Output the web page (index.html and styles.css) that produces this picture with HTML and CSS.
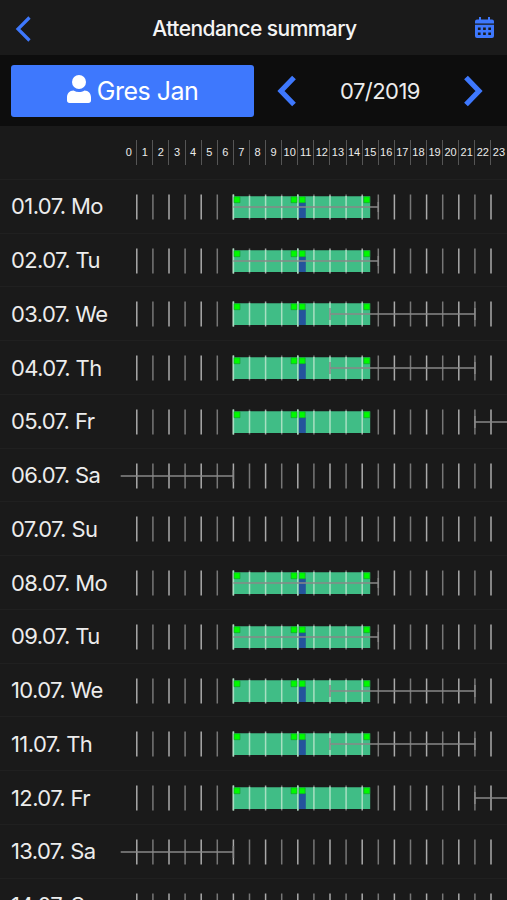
FILE: index.html
```
<!DOCTYPE html>
<html lang="en">
<head>
<meta charset="utf-8">
<title>Attendance summary</title>
<link rel="stylesheet" href="styles.css">
</head>
<body>
<header class="titlebar">
  <svg class="back" viewBox="0 0 16 26"><path d="M14.500 1.500 3 13l11.500 11.500"/></svg>
  <h1 class="title">Attendance summary</h1>
  <svg class="calendar" viewBox="0 0 19 21"><path fill-rule="evenodd" d="M4 0h2v2.500h7V0h2v2.500h2a2 2 0 0 1 2 2V6.500H0v-2a2 2 0 0 1 2-2h2zM0 7.700h19v11.300a2 2 0 0 1-2 2H2a2 2 0 0 1-2-2zM2.900 10.500v2.400h2.700v-2.400zm5.200 0v2.400h2.700v-2.400zm5.200 0v2.400h2.700v-2.400zM2.900 15.500v2.400h2.700v-2.400zm5.200 0v2.400h2.700v-2.400zm5.200 0v2.400h2.700v-2.400z"/></svg>
</header>
<section class="toolbar">
  <button class="person"><svg class="user" viewBox="0 0 24 28"><circle cx="12" cy="7" r="7"/><path d="M6.500 15.500c3.500 2 7.500 2 11 0 4 0 6.500 3 6.500 7v3c0 1.500-1 2.500-2.500 2.500h-19C1 28 0 27 0 25.500v-3c0-4 2.500-7 6.500-7z"/></svg><span class="name">Gres Jan</span></button>
  <svg class="arrow" viewBox="0 0 20 32"><path d="M17 2.500 4 16l13 13.500"/></svg>
  <span class="month">07/2019</span>
  <svg class="arrow" viewBox="0 0 20 32"><path d="M3 2.500 16 16 3 29.500"/></svg>
</section>
<svg class="defs" aria-hidden="true">
  <defs>
    <g id="ticks">
      <path class="odd" d="M16.800 14.500v25M49 14.500v25M81.200 14.500v25M113.400 14.500v25M145.600 14.500v25M177.800 14.500v25M210 14.500v25M242.200 14.500v25M274.400 14.500v25M306.600 14.500v25M338.800 14.500v25M371 14.500v25"/>
      <path class="even" d="M32.900 14.500v25M65.100 14.500v25M97.300 14.500v25M129.500 14.500v25M161.700 14.500v25M193.900 14.500v25M226.100 14.500v25M258.300 14.500v25M290.500 14.500v25M322.700 14.500v25M354.900 14.500v25"/>
    </g>
    <g id="work">
      <path class="present" d="M113.400 16.200H250.200V38H113.400z"/>
      <path class="break" d="M178.600 22.500h7.200V38h-7.200z"/>
      <path class="worktick" d="M113.400 14.500v25M129.500 16v22M145.600 16v22M161.700 16v22M177.800 14.500v25M193.900 16v22M210 16v22M226.100 16v22M242.200 16v22"/>
      <path class="stamp" d="M114 16.700h6v6h-6zM171 16.700h6v6h-6zM179.200 16.700h6v6h-6zM243.800 16.700h6v6h-6z"/>
    </g>
    <path id="morning" class="plan" d="M113.400 27H258.300M258.300 22v10"/>
    <path id="afternoon" class="plan" d="M210 27H354.900M210 21v12M354.900 21v12"/>
    <path id="night" class="plan" d="M354.900 27H387M354.900 21v12"/>
    <path id="nightend" class="plan" d="M.7 27H113.400M113.400 21v12"/>
  </defs>
</svg>
<main class="days">
  <div class="row hours"><span></span><div class="scale"><b>0</b><b>1</b><b>2</b><b>3</b><b>4</b><b>5</b><b>6</b><b>7</b><b>8</b><b>9</b><b>10</b><b>11</b><b>12</b><b>13</b><b>14</b><b>15</b><b>16</b><b>17</b><b>18</b><b>19</b><b>20</b><b>21</b><b>22</b><b>23</b></div></div>
  <div class="row"><span class="day">01.07. Mo</span><svg class="chart"><use href="#ticks"/><use href="#work"/><use href="#morning"/></svg></div>
  <div class="row"><span class="day">02.07. Tu</span><svg class="chart"><use href="#ticks"/><use href="#work"/><use href="#morning"/></svg></div>
  <div class="row"><span class="day">03.07. We</span><svg class="chart"><use href="#ticks"/><use href="#work"/><use href="#afternoon"/></svg></div>
  <div class="row"><span class="day">04.07. Th</span><svg class="chart"><use href="#ticks"/><use href="#work"/><use href="#afternoon"/></svg></div>
  <div class="row"><span class="day">05.07. Fr</span><svg class="chart"><use href="#ticks"/><use href="#work"/><use href="#night"/></svg></div>
  <div class="row"><span class="day">06.07. Sa</span><svg class="chart"><use href="#ticks"/><use href="#nightend"/></svg></div>
  <div class="row"><span class="day">07.07. Su</span><svg class="chart"><use href="#ticks"/></svg></div>
  <div class="row"><span class="day">08.07. Mo</span><svg class="chart"><use href="#ticks"/><use href="#work"/><use href="#morning"/></svg></div>
  <div class="row"><span class="day">09.07. Tu</span><svg class="chart"><use href="#ticks"/><use href="#work"/><use href="#morning"/></svg></div>
  <div class="row"><span class="day">10.07. We</span><svg class="chart"><use href="#ticks"/><use href="#work"/><use href="#afternoon"/></svg></div>
  <div class="row"><span class="day">11.07. Th</span><svg class="chart"><use href="#ticks"/><use href="#work"/><use href="#afternoon"/></svg></div>
  <div class="row"><span class="day">12.07. Fr</span><svg class="chart"><use href="#ticks"/><use href="#work"/><use href="#night"/></svg></div>
  <div class="row"><span class="day">13.07. Sa</span><svg class="chart"><use href="#ticks"/><use href="#nightend"/></svg></div>
  <div class="row"><span class="day">14.07. Su</span><svg class="chart"><use href="#ticks"/></svg></div>
</main>
</body>
</html>
```
FILE: styles.css
```
* { box-sizing: border-box; }
body {
  margin: 0;
  height: 900px;
  overflow: hidden;
  display: flex;
  flex-direction: column;
  background: #1a1a1a;
  color: #ececec;
  font-family: Inter, "Liberation Sans", sans-serif;
}
.titlebar {
  flex: none;
  height: 55px;
  padding: 1px 13px 0 15px;
  display: grid;
  grid-template-columns: 19px 1fr 19px;
  align-items: center;
}
.back { width: 16px; height: 26px; margin-top: 1px; fill: none; stroke: #3e78fd; stroke-width: 3.2; }
.title { margin: 0; text-align: center; font-size: 21px; font-weight: 500; letter-spacing: -.55px; color: #f4f4f4; }
.calendar { width: 19px; height: 21px; fill: #3e78fd; margin-top: -1px; }
.toolbar {
  flex: none;
  height: 71px;
  padding: 0 24px 0 11px;
  display: flex;
  align-items: center;
  background: #0d0d0d;
}
.person {
  width: 243px;
  height: 52px;
  padding: 0;
  border: 0;
  border-radius: 3px;
  background: #3e78fd;
  color: #fff;
  font: 400 25px Inter, "Liberation Sans", sans-serif;
  letter-spacing: -.5px;
  display: flex;
  align-items: center;
  justify-content: center;
  gap: 6px;
}
.user { width: 24px; height: 28px; fill: #fff; margin-top: -3px; }
.arrow { flex: none; width: 20px; height: 32px; fill: none; stroke: #3e78fd; stroke-width: 5.2; }
.person + .arrow { margin-left: 23px; }
.month { flex: 1; text-align: center; font-size: 22px; letter-spacing: -.55px; }
.defs { position: absolute; width: 0; height: 0; }
.days { flex: none; }
.row {
  height: 53.77px;
  display: grid;
  grid-template-columns: 109px 387px;
  align-items: center;
  padding-left: 11px;
  border-bottom: 1px solid #202020;
}
.day { font-size: 22px; letter-spacing: -.6px; white-space: nowrap; }
.chart { display: block; width: 387px; height: 53px; }
.scale { display: grid; grid-template-columns: repeat(24, 16.1px); padding-left: .2px; }
.scale b {
  height: 25px;
  text-align: center;
  font: 400 11px/24px "Liberation Sans", sans-serif;
  border-left: 1px solid #555;
}
.scale b:first-child { border-color: transparent; }
.odd, .even, .plan, .worktick { fill: none; stroke-width: 1.5; }
.odd { stroke: #aaa; }
.even { stroke: #777; }
.plan { stroke: #888; }
.worktick { stroke: #a9dfc2; }
.present { fill: #40bd86; }
.break { fill: #24549c; }
.stamp { fill: #00fa00; stroke: #139b2a; stroke-width: .6; }
```
